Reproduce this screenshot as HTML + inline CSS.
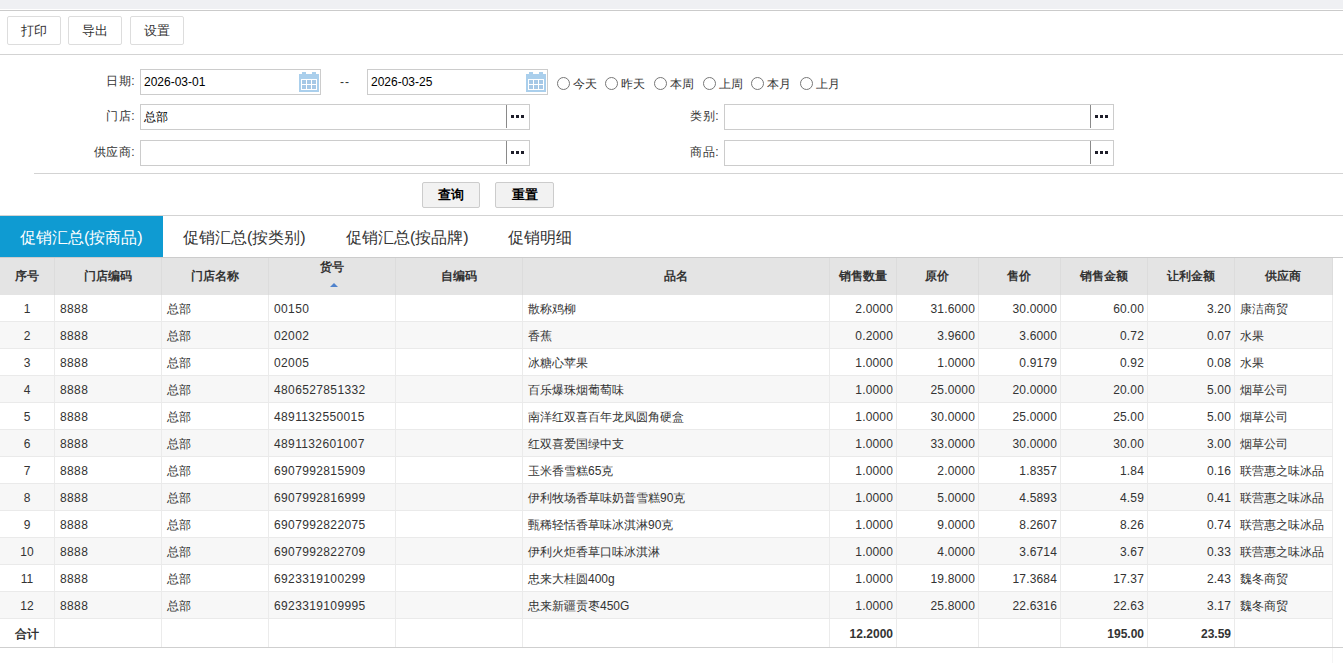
<!DOCTYPE html>
<html><head><meta charset="utf-8">
<style>
*{box-sizing:border-box;margin:0;padding:0}
html,body{width:1343px;height:663px;overflow:hidden;background:#fff}
body{position:relative;font-family:"Liberation Sans",sans-serif;font-size:12px;color:#333}
.abs{position:absolute}
.topbar{left:0;top:0;width:1343px;height:9px;background:#eff0f3}
.hline{position:absolute;height:1px;background:#d3d3d3}
.tbtn{position:absolute;top:16px;height:29px;width:54px;border:1px solid #ddd;border-radius:2px;background:#fff;text-align:center;line-height:28px;font-size:13px;color:#333}
.lbl{position:absolute;text-align:right;width:100px;font-size:12px;color:#333;line-height:24px;letter-spacing:0.5px}
.inp{position:absolute;height:26px;border:1px solid #ccc;background:#fff;line-height:24px;padding-left:3px;font-size:12px;color:#000}
.dots{position:absolute;right:0;top:0;width:23px;height:23px;border-left:1px solid #8a8a8a}
.dots i{position:absolute;top:10px;width:3px;height:3px;background:#1e1e2a}
.cal{position:absolute}
.radio{position:absolute;top:77px;width:13px;height:13px;border:1px solid #777;border-radius:50%}
.rtxt{position:absolute;top:75px;line-height:18px;font-size:12px;color:#333}
.qbtn{position:absolute;top:182px;height:26px;width:58px;border:1px solid #ccc;border-radius:2px;background:#f2f2f2;text-align:center;line-height:24px;font-size:13px;font-weight:bold;color:#000}
.tab{position:absolute;top:216px;height:41px;line-height:43px;font-size:16px;color:#333;padding:0 20px}
.tab.act{background:#0f9bd2;color:#fff}
.th{position:absolute;top:258px;height:37px;line-height:37px;text-align:center;font-weight:bold;font-size:12px;color:#333;border-right:1px solid #dcdcdc}
.sorttxt{position:absolute;left:0;right:0;top:-9px;text-align:center}
.sort{position:absolute;left:50%;margin-left:-2px;top:25px;width:0;height:0;border-left:4px solid transparent;border-right:4px solid transparent;border-bottom:4px solid #4f82cc}
.thead{left:0;top:258px;width:1333px;height:37px;background:#e4e4e4}
.tr{position:absolute;left:0;width:1333px;height:27px;border-bottom:1px solid #eaeaea;background:#fff}
.tr.alt{background:#f7f7f7}
.td{position:absolute;top:0;height:26px;line-height:28px;border-right:1px solid #ebebeb;font-size:12px;color:#333;padding:0 6px;white-space:nowrap;overflow:hidden}
.td.c{text-align:center}
.td.r{text-align:right;padding-right:3px}
.foot{height:28px;border-bottom:0}
.foot .td{height:28px;line-height:30px;font-weight:bold}
</style></head><body>
<div class="abs topbar"></div>
<div class="hline" style="left:0;top:10px;width:1343px;background:#cbcbcb"></div>
<div class="tbtn" style="left:7px">打印</div>
<div class="tbtn" style="left:68px">导出</div>
<div class="tbtn" style="left:130px">设置</div>
<div class="hline" style="left:0;top:54px;width:1343px"></div>

<div class="lbl" style="left:35px;top:69px">日期:</div>
<div class="inp" style="left:140px;top:69px;width:181px">2026-03-01
<svg class="cal" style="left:158px;top:2px" width="20" height="20" viewBox="0 0 20 20"><rect x="3" y="0" width="4" height="3" fill="#aacfec"/><rect x="13" y="0" width="4" height="3" fill="#aacfec"/><rect x="0" y="2" width="20" height="18" fill="#aacfec"/><rect x="2" y="7" width="16" height="11" fill="#fff"/><g fill="#a6c8e6"><rect x="3" y="8" width="4" height="4"/><rect x="8" y="8" width="4" height="4"/><rect x="13" y="8" width="4" height="4"/><rect x="3" y="13" width="4" height="4"/><rect x="8" y="13" width="4" height="4"/><rect x="13" y="13" width="4" height="4"/></g></svg>
</div>
<div class="abs" style="left:340px;top:69px;line-height:26px;color:#333;letter-spacing:1px">--</div>
<div class="inp" style="left:367px;top:69px;width:181px">2026-03-25
<svg class="cal" style="left:158px;top:2px" width="20" height="20" viewBox="0 0 20 20"><rect x="3" y="0" width="4" height="3" fill="#aacfec"/><rect x="13" y="0" width="4" height="3" fill="#aacfec"/><rect x="0" y="2" width="20" height="18" fill="#aacfec"/><rect x="2" y="7" width="16" height="11" fill="#fff"/><g fill="#a6c8e6"><rect x="3" y="8" width="4" height="4"/><rect x="8" y="8" width="4" height="4"/><rect x="13" y="8" width="4" height="4"/><rect x="3" y="13" width="4" height="4"/><rect x="8" y="13" width="4" height="4"/><rect x="13" y="13" width="4" height="4"/></g></svg>
</div>
<div class="radio" style="left:557px"></div><div class="rtxt" style="left:573px">今天</div>
<div class="radio" style="left:605px"></div><div class="rtxt" style="left:621px">昨天</div>
<div class="radio" style="left:654px"></div><div class="rtxt" style="left:670px">本周</div>
<div class="radio" style="left:703px"></div><div class="rtxt" style="left:719px">上周</div>
<div class="radio" style="left:751px"></div><div class="rtxt" style="left:767px">本月</div>
<div class="radio" style="left:800px"></div><div class="rtxt" style="left:816px">上月</div>

<div class="lbl" style="left:35px;top:104px">门店:</div>
<div class="inp" style="left:140px;top:104px;width:390px">总部<div class="dots"><i style="left:4px"></i><i style="left:9px"></i><i style="left:14px"></i></div></div>
<div class="lbl" style="left:35px;top:140px">供应商:</div>
<div class="inp" style="left:140px;top:140px;width:390px"><div class="dots"><i style="left:4px"></i><i style="left:9px"></i><i style="left:14px"></i></div></div>
<div class="lbl" style="left:619px;top:104px">类别:</div>
<div class="inp" style="left:724px;top:104px;width:390px"><div class="dots"><i style="left:4px"></i><i style="left:9px"></i><i style="left:14px"></i></div></div>
<div class="lbl" style="left:619px;top:140px">商品:</div>
<div class="inp" style="left:724px;top:140px;width:390px"><div class="dots"><i style="left:4px"></i><i style="left:9px"></i><i style="left:14px"></i></div></div>

<div class="hline" style="left:34px;top:173px;width:1309px"></div>
<div class="qbtn" style="left:422px">查询</div>
<div class="qbtn" style="left:495px;width:59px">重置</div>
<div class="hline" style="left:0;top:215px;width:1343px"></div>

<div class="tab act" style="left:0">促销汇总(按商品)</div>
<div class="tab" style="left:163px">促销汇总(按类别)</div>
<div class="tab" style="left:326px">促销汇总(按品牌)</div>
<div class="tab" style="left:488px">促销明细</div>
<div class="hline" style="left:0;top:257px;width:1343px;background:#ccc"></div>

<div class="abs thead"></div>
<div class="th" style="left:0px;width:55px">序号</div>
<div class="th" style="left:54px;width:108px">门店编码</div>
<div class="th" style="left:161px;width:108px">门店名称</div>
<div class="th" style="left:268px;width:128px"><span class="sorttxt">货号</span><span class="sort"></span></div>
<div class="th" style="left:395px;width:128px">自编码</div>
<div class="th" style="left:522px;width:308px">品名</div>
<div class="th" style="left:829px;width:68px">销售数量</div>
<div class="th" style="left:896px;width:83px">原价</div>
<div class="th" style="left:978px;width:83px">售价</div>
<div class="th" style="left:1060px;width:88px">销售金额</div>
<div class="th" style="left:1147px;width:88px">让利金额</div>
<div class="th" style="left:1234px;width:99px">供应商</div>
<div class="tr" style="top:295px">
<div class="td c" style="left:0px;width:55px">1</div>
<div class="td l" style="left:54px;width:108px;letter-spacing:0.37px">8888</div>
<div class="td l" style="left:161px;width:108px">总部</div>
<div class="td l" style="left:268px;width:128px;letter-spacing:0.37px">00150</div>
<div class="td l" style="left:395px;width:128px"></div>
<div class="td l" style="left:522px;width:308px">散称鸡柳</div>
<div class="td r" style="left:829px;width:68px;letter-spacing:0.16px">2.0000</div>
<div class="td r" style="left:896px;width:83px;letter-spacing:0.16px">31.6000</div>
<div class="td r" style="left:978px;width:83px;letter-spacing:0.16px">30.0000</div>
<div class="td r" style="left:1060px;width:88px;letter-spacing:0.16px">60.00</div>
<div class="td r" style="left:1147px;width:88px;letter-spacing:0.16px">3.20</div>
<div class="td l" style="left:1234px;width:99px">康洁商贸</div>
</div>
<div class="tr alt" style="top:322px">
<div class="td c" style="left:0px;width:55px">2</div>
<div class="td l" style="left:54px;width:108px;letter-spacing:0.37px">8888</div>
<div class="td l" style="left:161px;width:108px">总部</div>
<div class="td l" style="left:268px;width:128px;letter-spacing:0.37px">02002</div>
<div class="td l" style="left:395px;width:128px"></div>
<div class="td l" style="left:522px;width:308px">香蕉</div>
<div class="td r" style="left:829px;width:68px;letter-spacing:0.16px">0.2000</div>
<div class="td r" style="left:896px;width:83px;letter-spacing:0.16px">3.9600</div>
<div class="td r" style="left:978px;width:83px;letter-spacing:0.16px">3.6000</div>
<div class="td r" style="left:1060px;width:88px;letter-spacing:0.16px">0.72</div>
<div class="td r" style="left:1147px;width:88px;letter-spacing:0.16px">0.07</div>
<div class="td l" style="left:1234px;width:99px">水果</div>
</div>
<div class="tr" style="top:349px">
<div class="td c" style="left:0px;width:55px">3</div>
<div class="td l" style="left:54px;width:108px;letter-spacing:0.37px">8888</div>
<div class="td l" style="left:161px;width:108px">总部</div>
<div class="td l" style="left:268px;width:128px;letter-spacing:0.37px">02005</div>
<div class="td l" style="left:395px;width:128px"></div>
<div class="td l" style="left:522px;width:308px">冰糖心苹果</div>
<div class="td r" style="left:829px;width:68px;letter-spacing:0.16px">1.0000</div>
<div class="td r" style="left:896px;width:83px;letter-spacing:0.16px">1.0000</div>
<div class="td r" style="left:978px;width:83px;letter-spacing:0.16px">0.9179</div>
<div class="td r" style="left:1060px;width:88px;letter-spacing:0.16px">0.92</div>
<div class="td r" style="left:1147px;width:88px;letter-spacing:0.16px">0.08</div>
<div class="td l" style="left:1234px;width:99px">水果</div>
</div>
<div class="tr alt" style="top:376px">
<div class="td c" style="left:0px;width:55px">4</div>
<div class="td l" style="left:54px;width:108px;letter-spacing:0.37px">8888</div>
<div class="td l" style="left:161px;width:108px">总部</div>
<div class="td l" style="left:268px;width:128px;letter-spacing:0.37px">4806527851332</div>
<div class="td l" style="left:395px;width:128px"></div>
<div class="td l" style="left:522px;width:308px">百乐爆珠烟葡萄味</div>
<div class="td r" style="left:829px;width:68px;letter-spacing:0.16px">1.0000</div>
<div class="td r" style="left:896px;width:83px;letter-spacing:0.16px">25.0000</div>
<div class="td r" style="left:978px;width:83px;letter-spacing:0.16px">20.0000</div>
<div class="td r" style="left:1060px;width:88px;letter-spacing:0.16px">20.00</div>
<div class="td r" style="left:1147px;width:88px;letter-spacing:0.16px">5.00</div>
<div class="td l" style="left:1234px;width:99px">烟草公司</div>
</div>
<div class="tr" style="top:403px">
<div class="td c" style="left:0px;width:55px">5</div>
<div class="td l" style="left:54px;width:108px;letter-spacing:0.37px">8888</div>
<div class="td l" style="left:161px;width:108px">总部</div>
<div class="td l" style="left:268px;width:128px;letter-spacing:0.37px">4891132550015</div>
<div class="td l" style="left:395px;width:128px"></div>
<div class="td l" style="left:522px;width:308px">南洋红双喜百年龙凤圆角硬盒</div>
<div class="td r" style="left:829px;width:68px;letter-spacing:0.16px">1.0000</div>
<div class="td r" style="left:896px;width:83px;letter-spacing:0.16px">30.0000</div>
<div class="td r" style="left:978px;width:83px;letter-spacing:0.16px">25.0000</div>
<div class="td r" style="left:1060px;width:88px;letter-spacing:0.16px">25.00</div>
<div class="td r" style="left:1147px;width:88px;letter-spacing:0.16px">5.00</div>
<div class="td l" style="left:1234px;width:99px">烟草公司</div>
</div>
<div class="tr alt" style="top:430px">
<div class="td c" style="left:0px;width:55px">6</div>
<div class="td l" style="left:54px;width:108px;letter-spacing:0.37px">8888</div>
<div class="td l" style="left:161px;width:108px">总部</div>
<div class="td l" style="left:268px;width:128px;letter-spacing:0.37px">4891132601007</div>
<div class="td l" style="left:395px;width:128px"></div>
<div class="td l" style="left:522px;width:308px">红双喜爱国绿中支</div>
<div class="td r" style="left:829px;width:68px;letter-spacing:0.16px">1.0000</div>
<div class="td r" style="left:896px;width:83px;letter-spacing:0.16px">33.0000</div>
<div class="td r" style="left:978px;width:83px;letter-spacing:0.16px">30.0000</div>
<div class="td r" style="left:1060px;width:88px;letter-spacing:0.16px">30.00</div>
<div class="td r" style="left:1147px;width:88px;letter-spacing:0.16px">3.00</div>
<div class="td l" style="left:1234px;width:99px">烟草公司</div>
</div>
<div class="tr" style="top:457px">
<div class="td c" style="left:0px;width:55px">7</div>
<div class="td l" style="left:54px;width:108px;letter-spacing:0.37px">8888</div>
<div class="td l" style="left:161px;width:108px">总部</div>
<div class="td l" style="left:268px;width:128px;letter-spacing:0.37px">6907992815909</div>
<div class="td l" style="left:395px;width:128px"></div>
<div class="td l" style="left:522px;width:308px">玉米香雪糕65克</div>
<div class="td r" style="left:829px;width:68px;letter-spacing:0.16px">1.0000</div>
<div class="td r" style="left:896px;width:83px;letter-spacing:0.16px">2.0000</div>
<div class="td r" style="left:978px;width:83px;letter-spacing:0.16px">1.8357</div>
<div class="td r" style="left:1060px;width:88px;letter-spacing:0.16px">1.84</div>
<div class="td r" style="left:1147px;width:88px;letter-spacing:0.16px">0.16</div>
<div class="td l" style="left:1234px;width:99px">联营惠之味冰品</div>
</div>
<div class="tr alt" style="top:484px">
<div class="td c" style="left:0px;width:55px">8</div>
<div class="td l" style="left:54px;width:108px;letter-spacing:0.37px">8888</div>
<div class="td l" style="left:161px;width:108px">总部</div>
<div class="td l" style="left:268px;width:128px;letter-spacing:0.37px">6907992816999</div>
<div class="td l" style="left:395px;width:128px"></div>
<div class="td l" style="left:522px;width:308px">伊利牧场香草味奶普雪糕90克</div>
<div class="td r" style="left:829px;width:68px;letter-spacing:0.16px">1.0000</div>
<div class="td r" style="left:896px;width:83px;letter-spacing:0.16px">5.0000</div>
<div class="td r" style="left:978px;width:83px;letter-spacing:0.16px">4.5893</div>
<div class="td r" style="left:1060px;width:88px;letter-spacing:0.16px">4.59</div>
<div class="td r" style="left:1147px;width:88px;letter-spacing:0.16px">0.41</div>
<div class="td l" style="left:1234px;width:99px">联营惠之味冰品</div>
</div>
<div class="tr" style="top:511px">
<div class="td c" style="left:0px;width:55px">9</div>
<div class="td l" style="left:54px;width:108px;letter-spacing:0.37px">8888</div>
<div class="td l" style="left:161px;width:108px">总部</div>
<div class="td l" style="left:268px;width:128px;letter-spacing:0.37px">6907992822075</div>
<div class="td l" style="left:395px;width:128px"></div>
<div class="td l" style="left:522px;width:308px">甄稀轻恬香草味冰淇淋90克</div>
<div class="td r" style="left:829px;width:68px;letter-spacing:0.16px">1.0000</div>
<div class="td r" style="left:896px;width:83px;letter-spacing:0.16px">9.0000</div>
<div class="td r" style="left:978px;width:83px;letter-spacing:0.16px">8.2607</div>
<div class="td r" style="left:1060px;width:88px;letter-spacing:0.16px">8.26</div>
<div class="td r" style="left:1147px;width:88px;letter-spacing:0.16px">0.74</div>
<div class="td l" style="left:1234px;width:99px">联营惠之味冰品</div>
</div>
<div class="tr alt" style="top:538px">
<div class="td c" style="left:0px;width:55px">10</div>
<div class="td l" style="left:54px;width:108px;letter-spacing:0.37px">8888</div>
<div class="td l" style="left:161px;width:108px">总部</div>
<div class="td l" style="left:268px;width:128px;letter-spacing:0.37px">6907992822709</div>
<div class="td l" style="left:395px;width:128px"></div>
<div class="td l" style="left:522px;width:308px">伊利火炬香草口味冰淇淋</div>
<div class="td r" style="left:829px;width:68px;letter-spacing:0.16px">1.0000</div>
<div class="td r" style="left:896px;width:83px;letter-spacing:0.16px">4.0000</div>
<div class="td r" style="left:978px;width:83px;letter-spacing:0.16px">3.6714</div>
<div class="td r" style="left:1060px;width:88px;letter-spacing:0.16px">3.67</div>
<div class="td r" style="left:1147px;width:88px;letter-spacing:0.16px">0.33</div>
<div class="td l" style="left:1234px;width:99px">联营惠之味冰品</div>
</div>
<div class="tr" style="top:565px">
<div class="td c" style="left:0px;width:55px">11</div>
<div class="td l" style="left:54px;width:108px;letter-spacing:0.37px">8888</div>
<div class="td l" style="left:161px;width:108px">总部</div>
<div class="td l" style="left:268px;width:128px;letter-spacing:0.37px">6923319100299</div>
<div class="td l" style="left:395px;width:128px"></div>
<div class="td l" style="left:522px;width:308px">忠来大桂圆400g</div>
<div class="td r" style="left:829px;width:68px;letter-spacing:0.16px">1.0000</div>
<div class="td r" style="left:896px;width:83px;letter-spacing:0.16px">19.8000</div>
<div class="td r" style="left:978px;width:83px;letter-spacing:0.16px">17.3684</div>
<div class="td r" style="left:1060px;width:88px;letter-spacing:0.16px">17.37</div>
<div class="td r" style="left:1147px;width:88px;letter-spacing:0.16px">2.43</div>
<div class="td l" style="left:1234px;width:99px">魏冬商贸</div>
</div>
<div class="tr alt" style="top:592px">
<div class="td c" style="left:0px;width:55px">12</div>
<div class="td l" style="left:54px;width:108px;letter-spacing:0.37px">8888</div>
<div class="td l" style="left:161px;width:108px">总部</div>
<div class="td l" style="left:268px;width:128px;letter-spacing:0.37px">6923319109995</div>
<div class="td l" style="left:395px;width:128px"></div>
<div class="td l" style="left:522px;width:308px">忠来新疆贡枣450G</div>
<div class="td r" style="left:829px;width:68px;letter-spacing:0.16px">1.0000</div>
<div class="td r" style="left:896px;width:83px;letter-spacing:0.16px">25.8000</div>
<div class="td r" style="left:978px;width:83px;letter-spacing:0.16px">22.6316</div>
<div class="td r" style="left:1060px;width:88px;letter-spacing:0.16px">22.63</div>
<div class="td r" style="left:1147px;width:88px;letter-spacing:0.16px">3.17</div>
<div class="td l" style="left:1234px;width:99px">魏冬商贸</div>
</div>
<div class="tr foot" style="top:619px">
<div class="td c" style="left:0px;width:55px">合计</div>
<div class="td l" style="left:54px;width:108px"></div>
<div class="td l" style="left:161px;width:108px"></div>
<div class="td l" style="left:268px;width:128px"></div>
<div class="td l" style="left:395px;width:128px"></div>
<div class="td l" style="left:522px;width:308px"></div>
<div class="td r" style="left:829px;width:68px">12.2000</div>
<div class="td r" style="left:896px;width:83px"></div>
<div class="td r" style="left:978px;width:83px"></div>
<div class="td r" style="left:1060px;width:88px">195.00</div>
<div class="td r" style="left:1147px;width:88px">23.59</div>
<div class="td l" style="left:1234px;width:99px"></div>
</div>
<div class="hline" style="left:0;top:647px;width:1343px;background:#cfcfcf"></div>
<div class="abs" style="left:1332px;top:648px;width:1px;height:15px;background:#f4f4f4"></div>
</body></html>
